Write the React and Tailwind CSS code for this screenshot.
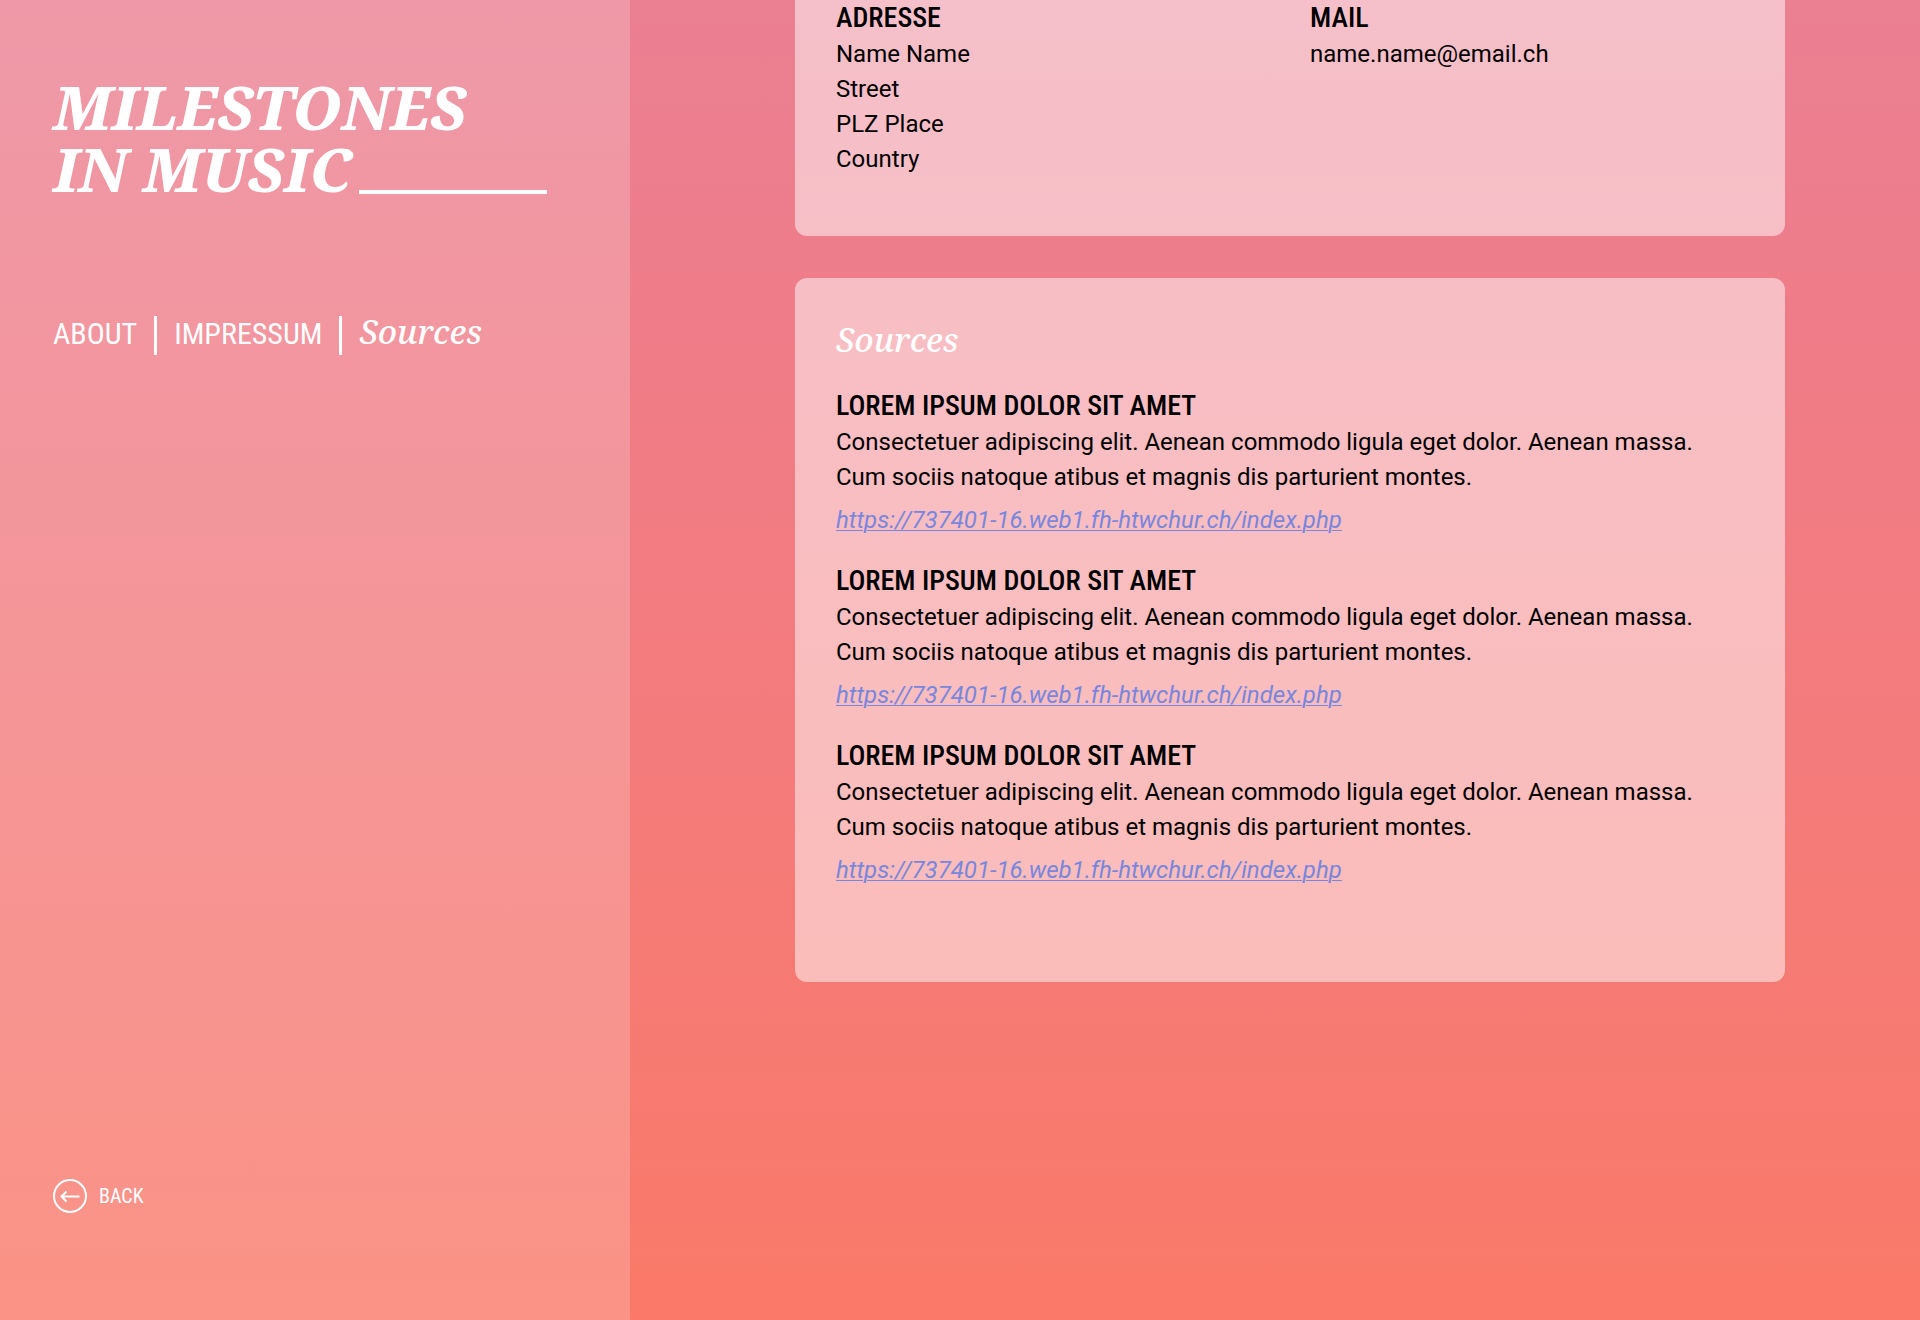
import React from "react";

const url = "https://737401-16.web1.fh-htwchur.ch/index.php";
const sources = [1, 2, 3];

function Heading({ children }) {
  return (
    <h3 className="mb-0.5 font-['Roboto_Condensed','Roboto',sans-serif] text-[28px] leading-[35px] font-medium">
      {children}
    </h3>
  );
}

function Sidebar() {
  return (
    <aside className="flex w-[630px] shrink-0 flex-col bg-white/20 pr-[83px] pb-[107px] pl-[53px] pt-[76px] text-white">
      <h1 className="font-['Noto_Serif','Liberation_Serif',serif] text-[61px] leading-[62px] font-extrabold italic">
        <span className="block">MILESTONES</span>
        <span className="flex items-end gap-2">
          <span className="whitespace-nowrap">IN MUSIC</span>
          <span className="mb-[6px] h-1 flex-1 bg-white" />
        </span>
      </h1>
      <nav className="mt-[116px] flex items-baseline gap-[17px] font-['Roboto_Condensed','Roboto',sans-serif] text-[30px] leading-[32px]">
        <a href="#about">ABOUT</a>
        <span className="h-[39px] w-[3px] self-stretch bg-white" />
        <a href="#impressum">IMPRESSUM</a>
        <span className="h-[39px] w-[3px] self-stretch bg-white" />
        <a
          href="#sources"
          className="font-['Noto_Serif','Liberation_Serif',serif] text-[33px] font-medium italic"
        >
          Sources
        </a>
      </nav>
      <button
        type="button"
        className="mt-auto flex cursor-pointer items-center gap-3 self-start font-['Roboto_Condensed','Roboto',sans-serif] text-[20px] leading-[34px]"
      >
        <svg
          width="34"
          height="34"
          viewBox="0 0 34 34"
          fill="none"
          stroke="currentColor"
          strokeWidth="2"
          aria-hidden="true"
        >
          <circle cx="17" cy="17" r="16" />
          <path d="M26.5 17.5H8.5M13.5 12.5L8.5 17.5L13.5 22.5" />
        </svg>
        BACK
      </button>
    </aside>
  );
}

export default function App() {
  return (
    <div className="flex min-h-screen bg-linear-to-b from-[#eb8093] via-[#ef7c88] via-25% to-[#fa7968] font-['Roboto',sans-serif] text-2xl leading-[35px] text-black">
      <Sidebar />
      <main className="flex-1 pr-[135px] pl-[165px]">
        <section className="grid grid-cols-2 gap-10 rounded-b-xl bg-white/50 px-[41px] pb-[59px]">
          <div>
            <Heading>ADRESSE</Heading>
            <address className="not-italic">
              Name Name
              <br />
              Street
              <br />
              PLZ Place
              <br />
              Country
            </address>
          </div>
          <div>
            <Heading>MAIL</Heading>
            <p>name.name@email.ch</p>
          </div>
        </section>
        <section
          id="sources"
          className="mt-[42px] rounded-xl bg-white/50 px-[41px] pt-[38px] pb-[94px]"
        >
          <h2 className="mb-6 font-['Noto_Serif','Liberation_Serif',serif] text-[33px] leading-[48px] font-medium text-white italic">
            Sources
          </h2>
          <div className="flex flex-col gap-[25px]">
            {sources.map((id) => (
              <article key={id}>
                <Heading>LOREM IPSUM DOLOR SIT AMET</Heading>
                <p>
                  Consectetuer adipiscing elit. Aenean commodo ligula eget
                  dolor. Aenean massa.
                  <br />
                  Cum sociis natoque atibus et magnis dis parturient montes.
                </p>
                <p className="mt-2">
                  <a
                    href={url}
                    className="text-[#7886de] italic underline decoration-1 underline-offset-2"
                  >
                    {url}
                  </a>
                </p>
              </article>
            ))}
          </div>
        </section>
      </main>
    </div>
  );
}
